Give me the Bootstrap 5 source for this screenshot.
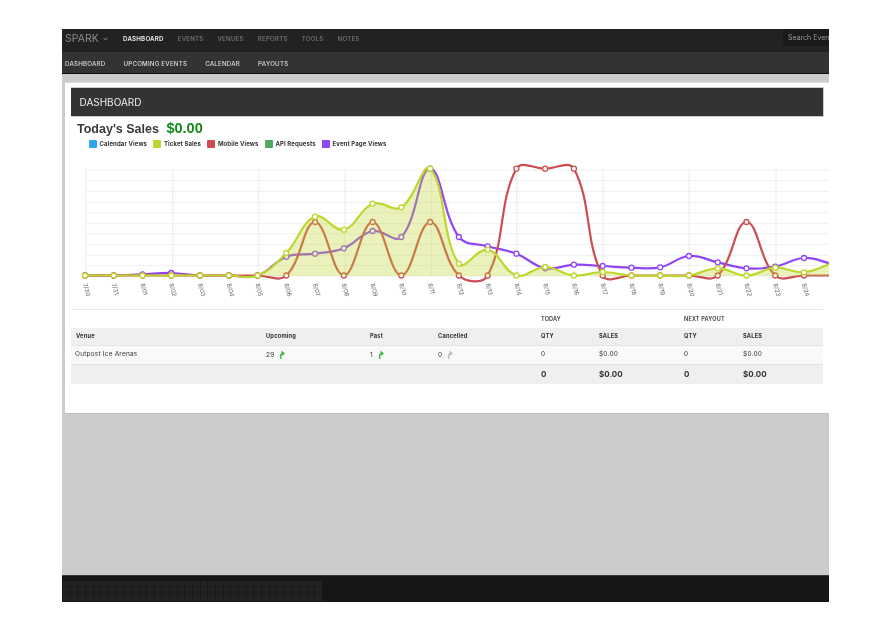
<!DOCTYPE html>
<html lang="en"><head><meta charset="utf-8"><title>Spark Dashboard</title>
<link href="https://cdn.jsdelivr.net/npm/bootstrap@5.3.0/dist/css/bootstrap.min.css" rel="stylesheet">
<style>
html,body{background:#fff;margin:0;height:635px;overflow:hidden}
body{font-family:Inter,"Liberation Sans",sans-serif;padding:29px 61px 33px 62px;color:#333}
.app-frame{width:767px;height:573px;background:#ccc;overflow:hidden;filter:blur(.35px)}
.top-bar{height:23px;background:#222}
.brand-name{font-size:10.5px;color:#8a8a8a;width:61px;padding-left:3px;line-height:18px}
.main-links a,.sub-links a{font-size:6.2px;text-decoration:none;letter-spacing:.2px;font-weight:500}
.main-links a{color:#7a7a7a;margin-right:14px}
.main-links a.is-active{color:#eee;font-weight:600}
.search-box{width:46px;height:17px;background:#1a1a1a;color:#999;font-size:7px;line-height:17px;padding-left:5px;white-space:nowrap;overflow:hidden}
.sub-bar{height:22px;background:#333;border-bottom:1px solid #0c0c0c;padding:2px 0 0 3px}
.sub-links a{color:#ddd;margin-right:18px}
.white-panel{margin:8px 0 0 3px;height:332px;background:#fff;border-top:1px solid #ddd;border-bottom:1px solid #bbb;padding-top:4px}
.panel-head{margin-left:6px;width:753px;height:30px;background:#333;color:#eee;font-size:10px;padding-left:8.5px;border:1px solid #ccc;border-width:1px 1px 1px 0;line-height:29px}
.sales-line{margin:3px 0 0 12px;font-size:12.5px;font-weight:700;line-height:16px;color:#3a3a3a;font-family:"Liberation Sans",sans-serif}
.sales-line span{color:#14891a;margin-left:4px;font-size:14.5px}
.legend-row{margin:3px 0 0 24px;font-size:6px;font-weight:700;line-height:8px;gap:6.4px;color:#333;letter-spacing:.11px}
.legend-item{display:flex;align-items:center;gap:2.5px}
.legend-box{width:8px;height:8px;border-radius:1px;display:block}
.chart-svg{display:block;width:764px;height:153px;margin-top:5px}
.tick-label{font-size:6px;fill:#666;font-family:Inter,"Liberation Sans",sans-serif}
.stats-table{margin:3px 0 0 6px;width:752px;table-layout:fixed;font-size:6.5px;--bs-table-bg:transparent}
.stats-table td,.stats-table th{padding:0 0 0 5px;vertical-align:middle;border-color:#e4e4e4;color:#333}
.stats-table .group-row th{height:18px;background:#fff;font-size:5.5px;letter-spacing:.2px;font-weight:600;border-top:1px solid #e8e8e8;border-bottom:0}
.stats-table .head-row th{height:18px;background:#efefef;font-weight:700;font-size:5.7px;letter-spacing:.2px}
.stats-table .body-row td{height:19px;background:#f9f9f9;font-size:6.5px;letter-spacing:.2px}
.stats-table .foot-row td{height:19px;background:#efefef;font-weight:700;font-size:8px;border-bottom:0}
.venue-cell{padding-left:4px!important}
.trend-icon{width:6px;height:9px;margin-left:5px;vertical-align:-2px}
.page-foot{margin-top:161px;height:27px;background:#161616;border-top:1px solid #3a3a3a;padding-top:5px}
.foot-grid{width:260px;height:21px;background-color:#222;background-image:repeating-linear-gradient(90deg,#1a1a1a 0 1px,transparent 1px 7.65px),repeating-linear-gradient(0deg,#1a1a1a 0 1px,transparent 1px 7.65px)}
</style></head>
<body>
<div class="app-frame">
  <div class="top-bar d-flex justify-content-between align-items-start">
    <div class="d-flex align-items-center" style="height:19px">
      <div class="brand-name d-flex align-items-center gap-1">SPARK
        <svg width="5" height="4" viewBox="0 0 5 4"><path d="M.6 1 2.5 3 4.4 1" fill="none" stroke="#8a8a8a"/></svg>
      </div>
      <nav class="main-links d-flex">
        <a class="is-active" href="#">DASHBOARD</a><a href="#">EVENTS</a><a href="#">VENUES</a><a href="#">REPORTS</a><a href="#">TOOLS</a><a href="#">NOTES</a>
      </nav>
    </div>
    <div class="search-box">Search Events</div>
  </div>
  <nav class="sub-bar sub-links d-flex align-items-center">
    <a href="#">DASHBOARD</a><a href="#">UPCOMING EVENTS</a><a href="#">CALENDAR</a><a href="#">PAYOUTS</a>
  </nav>
  <div class="white-panel">
    <div class="panel-head">DASHBOARD</div>
    <div class="sales-line">Today's Sales <span>$0.00</span></div>
    <div class="legend-row d-flex">
      <div class="legend-item"><i class="legend-box" style="background:#2ba6e8"></i>Calendar Views</div>
      <div class="legend-item"><i class="legend-box" style="background:#bfd62f"></i>Ticket Sales</div>
      <div class="legend-item"><i class="legend-box" style="background:#cc4e52"></i>Mobile Views</div>
      <div class="legend-item"><i class="legend-box" style="background:#4ea85a"></i>API Requests</div>
      <div class="legend-item"><i class="legend-box" style="background:#9146f5"></i>Event Page Views</div>
    </div>
    <svg class="chart-svg" id="chart" viewBox="65 153 764 153" xmlns="http://www.w3.org/2000/svg"></svg>
    <table class="table stats-table">
      <colgroup><col style="width:190px"><col style="width:104px"><col style="width:68px"><col style="width:103px"><col style="width:58px"><col style="width:85px"><col style="width:59px"><col style="width:85px"></colgroup>
      <thead>
        <tr class="group-row"><th colspan="4"></th><th colspan="2">TODAY</th><th colspan="2">NEXT PAYOUT</th></tr>
        <tr class="head-row"><th>Venue</th><th>Upcoming</th><th>Past</th><th>Cancelled</th><th>QTY</th><th>SALES</th><th>QTY</th><th>SALES</th></tr>
      </thead>
      <tbody>
        <tr class="body-row"><td class="venue-cell">Outpost Ice Arenas</td>
          <td>29<svg class="trend-icon" viewBox="0 0 6 9"><path d="M1.6 9C.4 7 .3 4.5 2.6 3V.6L6 3.4 2.8 6V4.8C2 5.8 2 7.6 3 9Z" fill="#3cb54a"/></svg></td>
          <td>1<svg class="trend-icon" viewBox="0 0 6 9"><path d="M1.6 9C.4 7 .3 4.5 2.6 3V.6L6 3.4 2.8 6V4.8C2 5.8 2 7.6 3 9Z" fill="#3cb54a"/></svg></td>
          <td>0<svg class="trend-icon" viewBox="0 0 6 9"><path d="M1.6 9C.4 7 .3 4.5 2.6 3V.6L6 3.4 2.8 6V4.8C2 5.8 2 7.6 3 9Z" fill="#bdbdbd"/></svg></td>
          <td>0</td><td>$0.00</td><td>0</td><td>$0.00</td></tr>
      </tbody>
      <tfoot>
        <tr class="foot-row"><td colspan="4"></td><td>0</td><td>$0.00</td><td>0</td><td>$0.00</td></tr>
      </tfoot>
    </table>
  </div>
  <div class="page-foot"><div class="foot-grid"></div></div>
</div>
<script>
(function(){
  var labels=['7/30','7/31','8/01','8/02','8/03','8/04','8/05','8/06','8/07','8/08','8/09','8/10','8/11','8/12','8/13','8/14','8/15','8/16','8/17','8/18','8/19','8/20','8/21','8/22','8/23','8/24',''];
  var B=275.5,T=168.7,M=222;
  var green=[B,B,B,B,B,B,B,253,216.7,229.7,203.7,207.3,T,263.7,249.7,B,267,B,272,B,B,B,268.3,B,267.7,272.3,263];
  var purple=[B,B,274.3,273,B,B,B,256.7,253.7,248.3,231,237,T,237,246.3,253.7,268.3,264.7,266,267.7,267.3,256,262.3,268.3,266.7,258,264];
  var red=[B,B,B,B,B,B,B,B,M,B,M,B,M,B,B,T,T,T,B,B,B,B,B,M,B,B,B];
  var xs=labels.map(function(_,i){return 85+i*28.76});
  function path(ys){
    var pts=ys.map(function(y,i){return [xs[i],y]}),c=[],t=.4;
    for(var i=0;i<pts.length;i++){
      var p0=pts[Math.max(i-1,0)],p1=pts[i],p2=pts[Math.min(i+1,pts.length-1)];
      var d1=Math.hypot(p1[0]-p0[0],p1[1]-p0[1]),d2=Math.hypot(p2[0]-p1[0],p2[1]-p1[1]);
      var s=d1+d2||1,fa=t*d1/s,fb=t*d2/s;
      c.push({a:[p1[0]-fa*(p2[0]-p0[0]),p1[1]-fa*(p2[1]-p0[1])],b:[p1[0]+fb*(p2[0]-p0[0]),p1[1]+fb*(p2[1]-p0[1])]});
    }
    var d='M'+pts[0].join(' ');
    for(i=1;i<pts.length;i++){d+='C'+c[i-1].b.map(f)+' '+c[i].a.map(f)+' '+pts[i].map(f)}
    return d;
  }
  function f(v){return v.toFixed(2)}
  var h='';
  [170,180.5,191.5,202.5,212.8,223.6,233.8,244.4,255.2,265.4,276].forEach(function(y){h+='<line x1="85" x2="829" y1="'+y+'" y2="'+y+'" stroke="#f0f0f0"/>'});
  [85.7,172.7,258.7,345,431.7,516.7,603,689,776].forEach(function(x){h+='<line x1="'+x+'" x2="'+x+'" y1="170" y2="276" stroke="#ececec"/>'});
  function dots(ys,col){return ys.map(function(y,i){return labels[i]?'<circle cx="'+xs[i]+'" cy="'+y+'" r="2.5" fill="#fff" stroke="'+col+'" stroke-width="1.3"/>':''}).join('')}
  function line(ys,col){return '<path d="'+path(ys)+'" fill="none" stroke="'+col+'" stroke-width="2.2"/>'}
  h+=line(purple,'#9146f5')+dots(purple,'#9146f5');
  h+=line(red,'#cc4e52')+dots(red,'#cc4e52');
  h+='<path d="'+path(green)+'L'+xs[26]+' 276L85 276Z" fill="#bfd62f" fill-opacity=".33"/>';
  h+=line(green,'#bfd62f')+dots(green,'#bfd62f');
  labels.forEach(function(l,i){if(l)h+='<text class="tick-label" transform="translate('+(xs[i]-2)+' 284) rotate(75)">'+l+'</text>'});
  document.getElementById('chart').innerHTML=h;
})();
</script>
<script src="https://cdn.jsdelivr.net/npm/bootstrap@5.3.0/dist/js/bootstrap.bundle.min.js"></script>
</body></html>
